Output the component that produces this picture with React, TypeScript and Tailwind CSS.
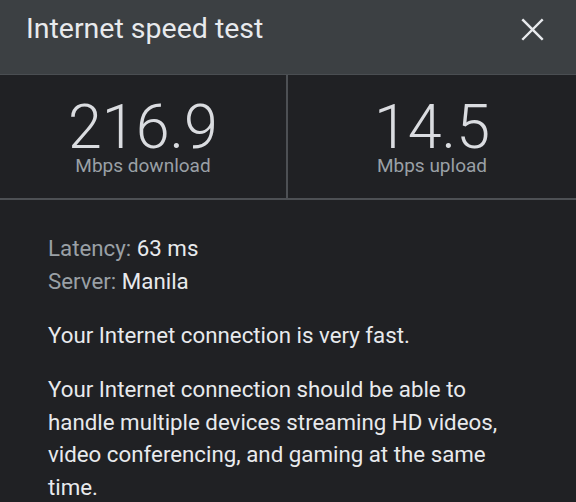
import React from "react";

const stats = [
    { value: "216.9", label: "Mbps download" },
    { value: "14.5", label: "Mbps upload" },
];

export default function App() {
    return (
        <div className="w-[576px] h-[502px] overflow-hidden bg-[#202124] text-[#e8eaed]" style={{ fontFamily: "Roboto, 'Noto Sans', sans-serif" }}>
            <div className="h-[75px] bg-[#3c4043] border-b border-[#4a4e52] flex items-center justify-between pl-[26px] pr-[31px] pb-[24px] pt-[9px]">
                <h1 className="text-[28.5px] leading-none text-[#e8eaed]">Internet speed test</h1>
                <svg width="25" height="25" viewBox="0 0 24 24" fill="none" stroke="#e8eaed" strokeWidth="2.3" strokeLinecap="square">
                    <path d="M3 3 L21 21 M21 3 L3 21" />
                </svg>
            </div>

            <div className="grid grid-cols-2 h-[125px] border-b-2 border-[#4d5054]">
                {stats.map((s, i) => (
                    <div
                        key={s.label}
                        className={`flex flex-col items-center pt-[25px] ${i === 0 ? "border-r-2 border-[#4d5054]" : ""}`}
                    >
                        <div className="text-[61px] font-light leading-[54px] text-[#dadce0]">{s.value}</div>
                        <div className="text-[19px] leading-[22px] text-[#9aa0a6] mt-[1px]">{s.label}</div>
                    </div>
                ))}
            </div>

            <div className="pl-[48px] pr-[60px] pt-[32px] text-[22.3px] leading-[33px]">
                <p><span className="text-[#9aa0a6]">Latency:</span> 63 ms</p>
                <p><span className="text-[#9aa0a6]">Server:</span> Manila</p>
                <p className="mt-[21px]">Your Internet connection is very fast.</p>
                <p className="mt-[21px] leading-[32.5px]">
                    Your Internet connection should be able to handle multiple devices streaming HD videos, video conferencing, and gaming at the same time.
                </p>
            </div>
        </div>
    );
}
